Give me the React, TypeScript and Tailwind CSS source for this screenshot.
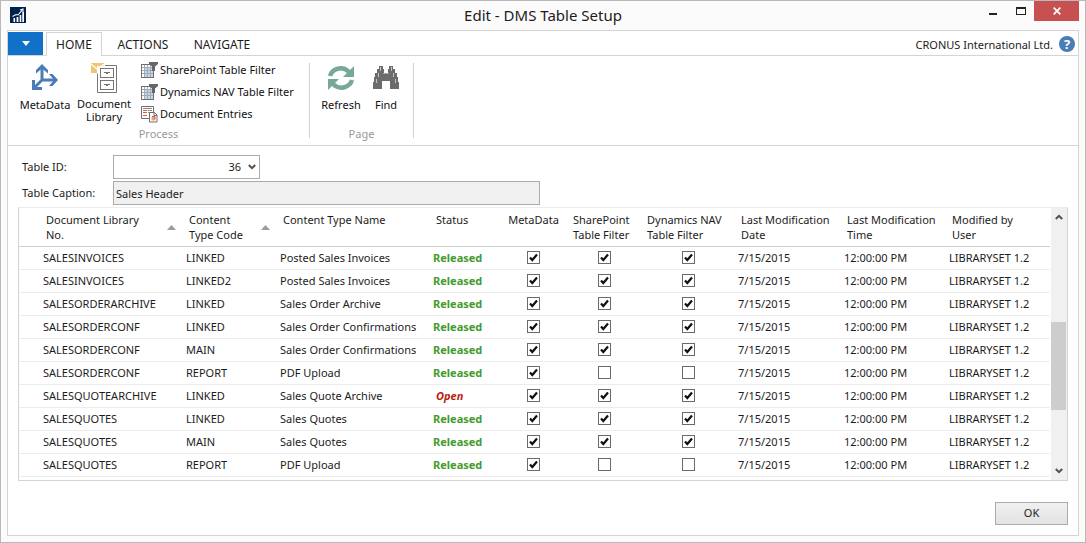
import { ReactNode } from "react";

type Row = {
  library: string;
  code: string;
  name: string;
  status: "Released" | "Open";
  filters: boolean;
};

const rows: Row[] = [
  { library: "SALESINVOICES", code: "LINKED", name: "Posted Sales Invoices", status: "Released", filters: true },
  { library: "SALESINVOICES", code: "LINKED2", name: "Posted Sales Invoices", status: "Released", filters: true },
  { library: "SALESORDERARCHIVE", code: "LINKED", name: "Sales Order Archive", status: "Released", filters: true },
  { library: "SALESORDERCONF", code: "LINKED", name: "Sales Order Confirmations", status: "Released", filters: true },
  { library: "SALESORDERCONF", code: "MAIN", name: "Sales Order Confirmations", status: "Released", filters: true },
  { library: "SALESORDERCONF", code: "REPORT", name: "PDF Upload", status: "Released", filters: false },
  { library: "SALESQUOTEARCHIVE", code: "LINKED", name: "Sales Quote Archive", status: "Open", filters: true },
  { library: "SALESQUOTES", code: "LINKED", name: "Sales Quotes", status: "Released", filters: true },
  { library: "SALESQUOTES", code: "MAIN", name: "Sales Quotes", status: "Released", filters: true },
  { library: "SALESQUOTES", code: "REPORT", name: "PDF Upload", status: "Released", filters: false },
];

function AppIcon() {
  return (
    <svg width="16" height="16" viewBox="0 0 16 16" aria-hidden="true">
      <rect width="16" height="16" fill="#00214d" />
      <path d="M3.5 11h1.6v4H3.5zM6.6 10h1.8v5H6.6zM9.7 8h1.6v7H9.7zM12.3 5h1.7v10h-1.7z" fill="#fff" />
      <path d="M2.5 9.5 6 7.5 8 8l4-4.6M10 3l3-1v3" fill="none" stroke="#fff" strokeWidth="1.1" />
    </svg>
  );
}

function MetaDataIcon() {
  return (
    <svg width="26" height="26" viewBox="0 0 26 26" aria-hidden="true">
      <path d="M10 2v14L2.500 23.500M10 16h14" fill="none" stroke="#4a7db5" strokeWidth="3" />
      <path
        d="M10 0l6 6v3.500L10 4.500 4 9.500V6zM26 16l-5.500 6H17l5-6-5-6h3.500zM0 16h3v7h7v3H0z"
        fill="#4a7db5"
      />
    </svg>
  );
}

function LibraryIcon() {
  return (
    <svg width="27" height="31" viewBox="0 0 27 31" aria-hidden="true">
      <path d="M0 0h13v3H6v7H0z" fill="#f0c674" />
      <path d="M0 1l6.500 5.500L13 1" fill="none" stroke="#fff" strokeWidth="1.200" />
      <path d="M6.500 10.500v19h19v-27H14" fill="none" stroke="#767676" />
      <rect x="9.500" y="5.500" width="13" height="9" fill="#fff" stroke="#767676" />
      <rect x="9.500" y="17.500" width="13" height="9" fill="#fff" stroke="#767676" />
      <path d="M13 9h6v1h-2v1h-2v-1h-2zM13 21h6v1h-2v1h-2v-1h-2z" fill="#767676" />
    </svg>
  );
}

function TableFilterIcon() {
  return (
    <svg width="17" height="17" viewBox="0 0 17 17" aria-hidden="true">
      <rect x="0.500" y="2.500" width="12" height="13" fill="#fff" stroke="#707070" />
      <path d="M4 6h8v9H4z" fill="#c3d7ec" />
      <path d="M3.500 3v12M6.500 3v12M9.500 3v12M1 5.500h11M1 8.500h11M1 11.500h11" stroke="#a3abb3" fill="none" />
      <path d="M8 0h9v2l-3 2.500V9h-3V4.500L8 2z" fill="#666" />
    </svg>
  );
}

function EntriesIcon() {
  return (
    <svg width="17" height="17" viewBox="0 0 17 17" aria-hidden="true">
      <path d="M.5.5h12v12H.5z" fill="#fff" stroke="#707070" />
      <path d="M2 4.500h4M2 6.500h4M2 9.500h4" stroke="#d8613c" />
      <path d="M2 2.500h9M7 4.500h4M7 6.500h4" stroke="#8a8a8a" />
      <path d="M8.500 6.500h5l2.500 2.500v7H8.500z" fill="#fff" stroke="#707070" />
      <path d="M13 6v3.500h3" stroke="#707070" fill="none" />
      <path d="M10.500 11h3.500v3.500h-3.500z" fill="#e9a18a" />
      <path d="M11 10.500h3v3" stroke="#d8613c" fill="none" />
    </svg>
  );
}

function RefreshIcon() {
  return (
    <svg width="28" height="28" viewBox="0 0 28 28" aria-hidden="true">
      <path d="M3 12C5 5 15 1 22 8" fill="none" stroke="#78a899" strokeWidth="4.500" />
      <path d="M27 2v11H16z" fill="#78a899" />
      <path d="M25 16c-2 7-12 11-19 4" fill="none" stroke="#78a899" strokeWidth="4.500" />
      <path d="M1 26V15h11z" fill="#78a899" />
    </svg>
  );
}

function FindIcon() {
  return (
    <svg width="28" height="26" viewBox="0 0 28 26" aria-hidden="true">
      <path
        d="M7 2h4v3h1v4h4V5h1V2h4v3h2v4h2v4h1v5h1v7h-9v-8h-8v8H1v-7h1v-5h1V9h2V5h2z"
        fill="#6c6c6c"
      />
      <path d="M8.500 3v4M19.500 3v4M6.500 9v4M21.500 9v4M4.500 15v4M23.500 15v4" stroke="#fff" strokeOpacity="0.600" fill="none" />
      <path d="M11 9.500h6" stroke="#a8a8a8" fill="none" />
    </svg>
  );
}

function Chevron({ up = false }: { up?: boolean }) {
  return (
    <svg width="8" height="6" viewBox="0 0 8 6" aria-hidden="true">
      <path d={up ? "M.8 5 4 1.800 7.200 5" : "M.8 1 4 4.200 7.200 1"} fill="none" stroke="#505050" strokeWidth="2" />
    </svg>
  );
}

function LargeAction({ icon, children, className }: { icon: ReactNode; children: ReactNode; className: string }) {
  return (
    <button type="button" className={`flex flex-col items-center leading-[13px] ${className}`}>
      <span className="flex h-[34px] items-start justify-center">{icon}</span>
      <span>{children}</span>
    </button>
  );
}

function SmallAction({ icon, children }: { icon: ReactNode; children: ReactNode }) {
  return (
    <button type="button" className="flex h-[22px] items-center gap-[2px] whitespace-nowrap">
      {icon}
      <span>{children}</span>
    </button>
  );
}

function Check({ checked, label }: { checked: boolean; label: string }) {
  return (
    <span className="mx-auto grid size-[13px] place-items-center">
      <input
        type="checkbox"
        aria-label={label}
        defaultChecked={checked}
        className="peer col-start-1 row-start-1 size-[13px] appearance-none border border-[#6a6a6a] bg-white"
      />
      <svg
        width="9"
        height="9"
        viewBox="0 0 9 9"
        aria-hidden="true"
        className="pointer-events-none invisible col-start-1 row-start-1 peer-checked:visible"
      >
        <path d="M1 4.500 3.300 7 8 1.500" fill="none" stroke="#111" strokeWidth="2.200" />
      </svg>
    </span>
  );
}

function Head({ children, sorted = false, center = false }: { children?: ReactNode; sorted?: boolean; center?: boolean }) {
  return (
    <th scope="col" className={`pt-1 align-top font-normal ${center ? "text-center" : "pl-[6px] text-left"}`}>
      <div className={`flex items-center ${center ? "justify-center" : "justify-between"}`}>
        <span className="whitespace-nowrap">{children}</span>
        {sorted && (
          <svg width="9" height="5" viewBox="0 0 9 5" aria-hidden="true" className="mr-[7px]">
            <path d="M0 5 4.500 0 9 5z" fill="#9c9c9c" />
          </svg>
        )}
      </div>
    </th>
  );
}

export default function App() {
  return (
    <div className="flex min-h-screen flex-col border border-[#b9b9b9] bg-[#fbfbfb] px-[6px] pb-[6px] font-['Noto_Sans',sans-serif] text-[11px] text-[#1c1c1c]">
      <header className="grid h-[29px] shrink-0 grid-cols-[1fr_auto_1fr] items-start">
        <div className="pt-[6px] pl-[3px]">
          <AppIcon />
        </div>
        <h1 className="pt-1 text-[15px] leading-[20px]">Edit - DMS Table Setup</h1>
        <div className="flex justify-end">
          <button type="button" aria-label="Minimize" className="flex h-5 w-7 items-center justify-center">
            <svg width="10" height="10" viewBox="0 0 10 10" aria-hidden="true">
              <path d="M1 7h8v2H1z" fill="#222" />
            </svg>
          </button>
          <button type="button" aria-label="Maximize" className="flex h-5 w-[27px] items-center justify-center">
            <svg width="10" height="10" viewBox="0 0 10 10" aria-hidden="true">
              <path d="M0 1h10v8H0zM1 3v5h8V3z" fill="#222" fillRule="evenodd" />
            </svg>
          </button>
          <button type="button" aria-label="Close" className="flex h-5 w-[45px] items-center justify-center bg-[#c75050]">
            <svg width="8" height="8" viewBox="0 0 8 8" aria-hidden="true">
              <path d="M.7.7l6.600 6.600M7.300.7.7 7.300" stroke="#fff" strokeWidth="1.700" />
            </svg>
          </button>
        </div>
      </header>

      <div className="flex flex-1 flex-col border border-[#d4d4d4] bg-white">
        <nav className="flex h-[25px] items-stretch border-b border-[#d4d4d4] pt-px">
          <button type="button" aria-label="Application menu" className="flex w-[35px] items-center justify-center bg-[#1170c8]">
            <svg width="8" height="5" viewBox="0 0 8 5" aria-hidden="true">
              <path d="M0 0h8L4 5z" fill="#fff" />
            </svg>
          </button>
          <button type="button" className="z-10 -mb-px ml-[3px] w-14 border border-b-0 border-[#d4d4d4] bg-white pt-px text-[12px]">
            HOME
          </button>
          <button type="button" className="w-[82px] pt-[3px] text-[12px]">ACTIONS</button>
          <button type="button" className="w-[76px] pt-[3px] text-[12px]">NAVIGATE</button>
          <div className="ml-auto flex items-center gap-[6px] pr-[3px]">
            <span className="pt-[3px]">CRONUS International Ltd.</span>
            <button type="button" aria-label="Help" className="flex size-4 items-center justify-center rounded-full bg-[#4a7db5] text-[13px] leading-4 font-bold text-white">
              ?
            </button>
          </div>
        </nav>

        <section aria-label="Ribbon" className="flex h-[90px] border-b border-[#d4d4d4] pt-[7px] pb-[7px] text-[#111]">
          <div className="flex w-[302px] flex-col justify-between border-r border-[#d4d4d4]">
            <div className="flex items-start pl-2">
              <LargeAction className="w-[58px] pt-px" icon={<MetaDataIcon />}>MetaData</LargeAction>
              <LargeAction className="w-[60px]" icon={<LibraryIcon />}>
                Document
                <br />
                Library
              </LargeAction>
              <div className="-mt-1 flex flex-col pl-[7px]">
                <SmallAction icon={<TableFilterIcon />}>SharePoint Table Filter</SmallAction>
                <SmallAction icon={<TableFilterIcon />}>Dynamics NAV Table Filter</SmallAction>
                <SmallAction icon={<EntriesIcon />}>Document Entries</SmallAction>
              </div>
            </div>
            <p className="text-center leading-[8px] text-[#999]">Process</p>
          </div>
          <div className="flex w-[104px] flex-col justify-between border-r border-[#d4d4d4]">
            <div className="flex items-start pl-2">
              <LargeAction className="w-[46px] pt-px" icon={<RefreshIcon />}>Refresh</LargeAction>
              <LargeAction className="w-[44px] pt-px" icon={<FindIcon />}>Find</LargeAction>
            </div>
            <p className="text-center leading-[8px] text-[#999]">Page</p>
          </div>
        </section>

        <main className="flex flex-1 flex-col px-[10px] pt-[9px]">
          <form className="mb-[2px] grid grid-cols-[91px_1fr] items-center gap-y-[2px] pl-1">
            <label htmlFor="table-id">Table ID:</label>
            <div className="grid w-[147px] items-center">
              <select id="table-id" defaultValue="36" className="col-start-1 row-start-1 h-6 w-full appearance-none border border-[#ababab] bg-white pr-[18px] [text-align-last:right]">
                <option>36</option>
              </select>
              <span className="pointer-events-none z-10 col-start-1 row-start-1 mr-1 justify-self-end">
                <Chevron />
              </span>
            </div>
            <label htmlFor="table-caption" className="whitespace-nowrap">Table Caption:</label>
            <input
              id="table-caption"
              readOnly
              defaultValue="Sales Header"
              className="h-6 w-full max-w-[427px] border border-[#ababab] bg-[#f0f0f0] px-[2px]"
            />
          </form>

          <div className="flex border border-[#d4d4d4] border-t-[#ececec]">
            <div className="min-w-0 flex-1 pr-px pb-[3px]">
              <table className="w-full table-fixed border-collapse">
                <colgroup>
                  <col className="w-[21px]" />
                  <col className="w-[143px]" />
                  <col className="w-[94px]" />
                  <col className="w-[153px]" />
                  <col className="w-[70px]" />
                  <col className="w-[67px]" />
                  <col className="w-[74px]" />
                  <col className="w-[94px]" />
                  <col className="w-[106px]" />
                  <col className="w-[105px]" />
                  <col />
                </colgroup>
                <thead>
                  <tr className="h-[38px] border-b border-[#d0d0d0] leading-[15px]">
                    <td />
                    <Head sorted>Document Library<br />No.</Head>
                    <Head sorted>Content<br />Type Code</Head>
                    <Head>Content Type Name</Head>
                    <Head>Status</Head>
                    <Head center>MetaData</Head>
                    <Head>SharePoint<br />Table Filter</Head>
                    <Head>Dynamics NAV<br />Table Filter</Head>
                    <Head>Last Modification<br />Date</Head>
                    <Head>Last Modification<br />Time</Head>
                    <Head>Modified by<br />User</Head>
                  </tr>
                </thead>
                <tbody>
                  {rows.map((row, i) => (
                    <tr key={i} className="h-[23px] border-b border-[#ececec] leading-[15px] whitespace-nowrap">
                      <td />
                      <td className="pl-[3px]">{row.library}</td>
                      <td className="pl-[3px]">{row.code}</td>
                      <td className="pl-[3px]">{row.name}</td>
                      <td className={`font-bold ${row.status === "Open" ? "pl-[6px] text-[#b81c0c] italic" : "pl-[3px] text-[#449b2c]"}`}>
                        {row.status}
                      </td>
                      <td><Check checked label="MetaData" /></td>
                      <td><Check checked={row.filters} label="SharePoint Table Filter" /></td>
                      <td><Check checked={row.filters} label="Dynamics NAV Table Filter" /></td>
                      <td className="pl-[3px]">7/15/2015</td>
                      <td className="pl-[3px]">12:00:00 PM</td>
                      <td className="pl-[3px]">LIBRARYSET 1.2</td>
                    </tr>
                  ))}
                </tbody>
              </table>
            </div>
            <div className="flex w-[16px] flex-col items-center bg-[#f0f0f0] py-[6px]">
              <Chevron up />
              <div className="flex w-full flex-1 flex-col pb-[58px]">
                <div className="mt-auto h-[88px] w-[15px] bg-[#cdcdcd]" />
              </div>
              <Chevron />
            </div>
          </div>

          <div className="mt-[21px] flex justify-end">
            <button type="button" className="h-[23px] w-[73px] border border-[#ababab] bg-linear-to-b from-[#f0f0f0] to-[#e3e3e3]">
              OK
            </button>
          </div>
        </main>
      </div>
    </div>
  );
}
